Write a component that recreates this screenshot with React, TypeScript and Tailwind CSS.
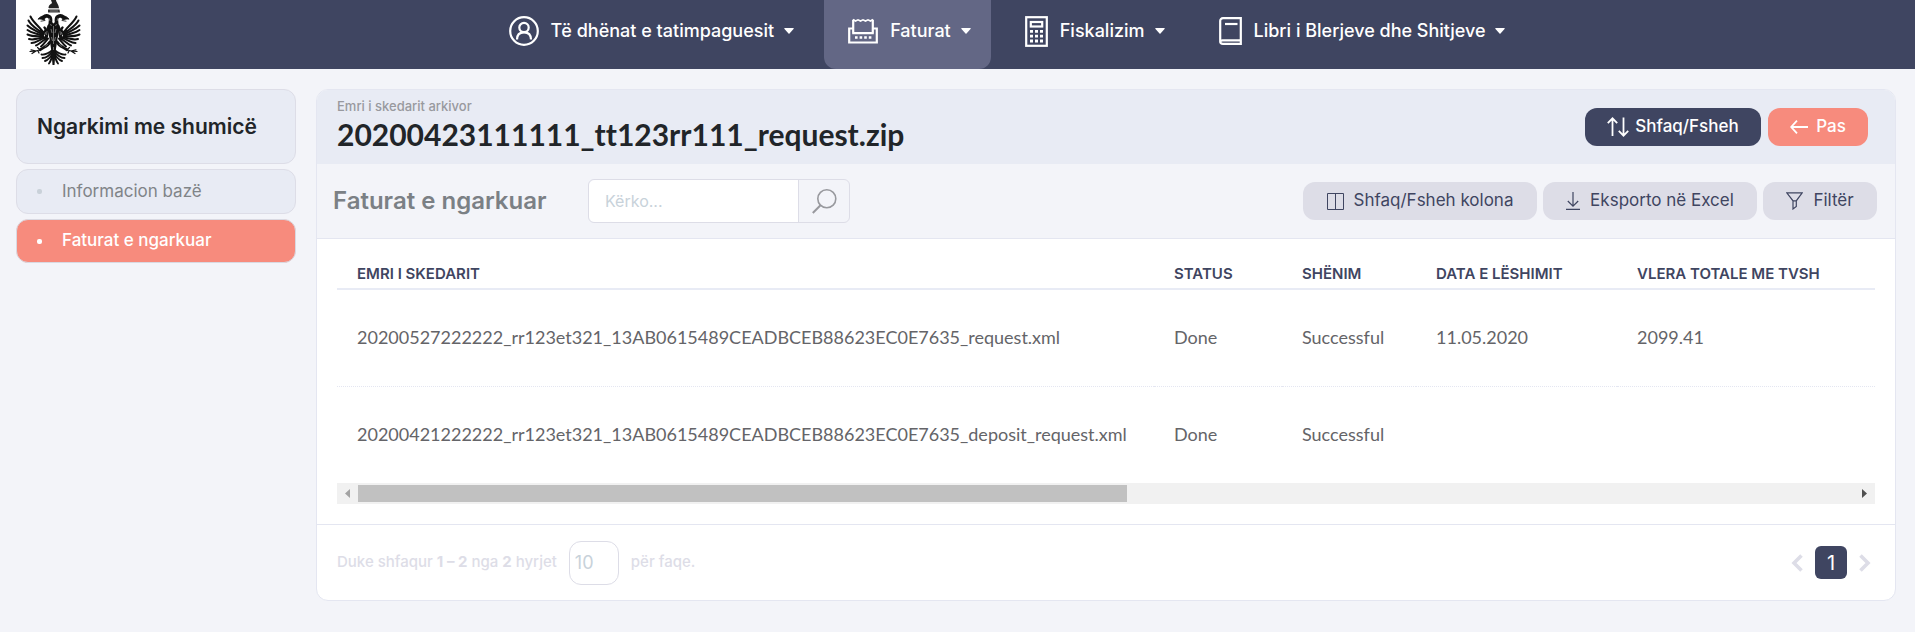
import React from 'react';

interface IconProps {
    className?: string;
}

function EagleHalf() {
    return (
        <g fill="none" stroke="#111" strokeLinecap="round" strokeLinejoin="round">
            {/* wing feathers */}
            <g strokeWidth="2">
                <path d="M28 34 C25 27 18 24 14.500 16.500" />
                <path d="M27 34 C22 29 16 27 12.500 20.500" />
                <path d="M27 35 C21 31 16 30 11.500 25.500" />
                <path d="M27 36 C21 33 16 33.500 11.500 30" />
                <path d="M27.500 36.500 C21 36 17 37 11.500 34.500" />
                <path d="M28 37.500 C22 38 18 40.500 13 39" />
                <path d="M29 38 C24 39 20 43 15.500 43" />
                <path d="M30.500 38.500 C26 41 23 44.500 20 45.500" />
                <path d="M32 38.500 C29 42 27 45 25 46.500" />
            </g>
            {/* shoulder */}
            <path d="M24 31 C29 34 31 30 28.500 27.500" strokeWidth="2.400" />
            <path d="M33 26 C31 30 31 35 30 38" strokeWidth="3.200" />
            {/* head, beak and neck */}
            <path d="M27.500 17.200 C30 14.800 34 16 34.500 19 C35 22 33.500 24 34.500 27" strokeWidth="3.600" />
            <path d="M29 16 C26 15.500 23.500 17 22 19.200 C24.500 18.600 26.500 19.600 28 20 Z" fill="#111" strokeWidth=".8" />
            <path d="M25 21.200 L29 20.500" strokeWidth=".8" />
            {/* leg and claw */}
            <path d="M34 42 C32 46 28 47 24 49.800" strokeWidth="2.800" />
            <path d="M25 49.500 L20 51 L15 49.800 M20 51 L14 51.500 M20 51 L16 53.500 M24 49.800 L21.500 47.500 M22 51 L23 53" strokeWidth="1.200" />
            {/* tail */}
            <g strokeWidth="1.900">
                <path d="M36.500 50 C33 53 29 55 25.500 54.500" />
                <path d="M36.500 51 C34 55 30 58 26.500 58" />
                <path d="M37 52 C35 57 32 60 29 61" />
                <path d="M37 52 C36 57 35 61 33 63.500" />
            </g>
        </g>
    );
}

function Logo() {
    return (
        <svg viewBox="0 0 75 69" className="block h-[69px] w-[75px] bg-white" role="img" aria-label="Logo">
            <EagleHalf />
            <g transform="translate(75 0) scale(-1 1)">
                <EagleHalf />
            </g>
            {/* helmet */}
            <path d="M35 0 L40 0 C40 2 42.500 4 43 8 L32.500 8 C32.500 5 35 4 36 3 Z" fill="#222" />
            <path d="M32 9.500 L43.500 9.500 L44 12.500 L32 12.500 Z" fill="#333" />
            <path d="M33 8.700 H43 M34 11 H42" stroke="#999" strokeWidth=".7" />
            <path d="M34 20 L37.500 23.500 L41 20 L43 30 L41 42 L39.500 52 L38.500 65 H36.500 L35.500 52 L34 42 L32 30 Z" fill="#111" />
            <path d="M37.500 26 V44 M35 29 L36 33 M40 29 L39 33 M35.500 37 L36.500 41 M39.500 37 L38.500 41 M34.500 24 L35.500 26 M40.500 24 L39.500 26 M37.500 47 V50" stroke="#999" strokeWidth=".7" />
            <g stroke="#999" strokeWidth=".6">
                <path d="M33 18 L34 21 M42 18 L41 21 M31 31 L30.500 35 M44 31 L44.500 35 M32 44 L29 46.500 M43 44 L46 46.500" />
            </g>
        </svg>
    );
}

function PersonIcon() {
    return (
        <svg viewBox="0 0 30 30" className="h-[30px] w-[30px]" fill="none" stroke="currentColor" strokeWidth="2.200">
            <circle cx="15" cy="15" r="13.800" />
            <circle cx="15" cy="11.500" r="4.700" />
            <path d="M8 23.500 C8 18.500 11 16.300 15 16.300 C19 16.300 22 18.500 22 23.500" />
        </svg>
    );
}

function InvoiceIcon() {
    return (
        <svg viewBox="0 0 30 26" className="h-[26px] w-[30px]" fill="none" stroke="currentColor" strokeWidth="2.200">
            <path d="M5 10.500 H1.200 V24.500 H28.800 V10.500 H25" />
            <path d="M5.200 15.200 V1.800 M24.800 1.800 V15.200 M4.200 15.200 H25.800" />
            <path d="M5 1.500 L7.500 3 L10 1.800 L12.500 3 L15 1.800 L17.500 3 L20 1.800 L22.500 3 L25 1.500" strokeWidth="1.600" />
            <path d="M7 19.500 H24" strokeWidth="2.600" strokeDasharray="2.600 2" />
        </svg>
    );
}

function CalculatorIcon() {
    return (
        <svg viewBox="0 0 23 31" className="h-[31px] w-[23px]" fill="none" stroke="currentColor" strokeWidth="2.200">
            <rect x="1.200" y="1.200" width="20.600" height="28.600" />
            <rect x="5.800" y="6" width="11.400" height="4.500" />
            <path d="M5 15.300 H18.500 M5 20.200 H18.500 M5 25 H18.500" strokeWidth="2.800" strokeDasharray="3 2" />
        </svg>
    );
}

function BookIcon() {
    return (
        <svg viewBox="0 0 23 28" className="h-7 w-[23px]" fill="none" stroke="currentColor" strokeWidth="2.200">
            <path d="M21.800 23 V1.200 H4 C2.300 1.200 1.200 2.500 1.200 4 V24.500 C1.200 26 2.300 26.800 4 26.800 H21.800 V23.300 H3.500 C2 23.300 1.200 24 1.200 25" />
            <path d="M6 7 H18.500" />
        </svg>
    );
}

function Caret() {
    return (
        <svg viewBox="0 0 10 6" className="h-1.5 w-2.5" fill="currentColor">
            <path d="M.5 0 H9.500 Q10 .5 9.500 1 L5.500 5.500 Q5 6 4.500 5.500 L.5 1 Q0 .5 .5 0 Z" />
        </svg>
    );
}

function SearchIcon() {
    return (
        <svg viewBox="0 0 25 25" className="h-[25px] w-[25px]" fill="none" stroke="currentColor" strokeWidth="1.600">
            <circle cx="14.800" cy="9.800" r="9" />
            <path d="M8.500 16.200 L.8 24" strokeWidth="2" />
        </svg>
    );
}

function SwapIcon() {
    return (
        <svg viewBox="0 0 22 20" className="h-5 w-[22px]" fill="none" stroke="currentColor" strokeWidth="1.800">
            <path d="M5.500 19 V1.500 M.8 6.200 L5.500 1.300 L10.200 6.200 M16.500 .5 V18.500 M11.800 13.800 L16.500 18.700 L21.200 13.800" />
        </svg>
    );
}

function BackIcon() {
    return (
        <svg viewBox="0 0 18 14" className="h-3.5 w-[18px]" fill="none" stroke="currentColor" strokeWidth="1.800">
            <path d="M18 7 H1.500 M7 .7 L1.200 7 L7 13.300" />
        </svg>
    );
}

function ColumnsIcon() {
    return (
        <svg viewBox="0 0 17 17" className="h-[17px] w-[17px]" fill="none" stroke="currentColor">
            <path d="M.5 .5 H16.500 V16.500 H.5 Z M8.500 .5 V16.500" />
        </svg>
    );
}

function DownloadIcon() {
    return (
        <svg viewBox="0 0 14 18" className="h-[18px] w-3.5" fill="none" stroke="currentColor" strokeWidth="1.200">
            <path d="M7 0 V14 M1.800 9 L7 14.200 L12.200 9 M0 17.300 H14" />
        </svg>
    );
}

function FilterIcon() {
    return (
        <svg viewBox="0 0 17 18" className="h-[18px] w-[17px]" fill="none" stroke="currentColor" strokeWidth="1.200">
            <path d="M.8 .8 H16.200 L10.300 8.800 V14.500 L7 17 V8.800 Z M7 8.800 H10.300" />
        </svg>
    );
}

function Chevron({ className }: IconProps) {
    return (
        <svg viewBox="0 0 12 18" className={className} fill="none" stroke="currentColor" strokeWidth="3.600">
            <path d="M10.500 1.500 L3 9 L10.500 16.500" />
        </svg>
    );
}

const menu = [
    { label: 'Të dhënat e tatimpaguesit', icon: <PersonIcon />, active: false },
    { label: 'Faturat', icon: <InvoiceIcon />, active: true },
    { label: 'Fiskalizim', icon: <CalculatorIcon />, active: false },
    { label: 'Libri i Blerjeve dhe Shitjeve', icon: <BookIcon />, active: false },
];

const columns = ['Emri i skedarit', 'Status', 'Shënim', 'Data e lëshimit', 'Vlera totale me TVSH'];
const widths = ['w-[817px]', 'w-[128px]', 'w-[134px]', 'w-[201px]', ''];

const rows = [
    ['20200527222222_rr123et321_13AB0615489CEADBCEB88623EC0E7635_request.xml', 'Done', 'Successful', '11.05.2020', '2099.41'],
    ['20200421222222_rr123et321_13AB0615489CEADBCEB88623EC0E7635_deposit_request.xml', 'Done', 'Successful', '', ''],
];

function Header() {
    return (
        <header className="flex bg-[#3f4561] px-4">
            <Logo />
            <nav className="flex flex-1 justify-center gap-2.5 pl-5 text-lg font-medium text-white">
                {menu.map(({ label, icon, active }) => (
                    <a key={label} href="#" className={`flex items-center rounded-b-xl pr-5 pb-[7px] pl-6 whitespace-nowrap ${active ? 'bg-[#636785]' : ''}`}>
                        {icon}
                        <span className="mr-2.5 ml-3">{label}</span>
                        <Caret />
                    </a>
                ))}
            </nav>
        </header>
    );
}

function Sidebar() {
    return (
        <aside className="flex w-[280px] shrink-0 flex-col gap-[5px]">
            <div className="flex h-[75px] items-center rounded-xl border border-[#dddde7] bg-[#e8ebf4] px-5">
                <h2 className="text-[21px] font-semibold whitespace-nowrap text-[#212529]">Ngarkimi me shumicë</h2>
            </div>
            <a href="#" className="flex h-[45px] items-center rounded-xl border border-[#dddde7] bg-[#e8ebf4] px-5 text-[17px] text-[#808488]">
                <span className="mr-5 h-[5px] w-[5px] rounded-xs bg-[#c9d1d9]" />
                Informacion bazë
            </a>
            <a href="#" className="flex h-11 items-center rounded-xl border border-[#d9d9e2] bg-[#f78b7d] px-5 text-[17px] font-medium text-white">
                <span className="mr-5 h-[5px] w-[5px] rounded-xs bg-white" />
                Faturat e ngarkuar
            </a>
        </aside>
    );
}

function RecordTable() {
    return (
        <table className="w-full table-fixed border-collapse">
            <thead>
                <tr className="border-b-2 border-[#e8ebf5]">
                    {columns.map((c, i) => (
                        <th key={c} scope="col" className={`${widths[i]} h-[50px] pt-5 pl-5 text-left text-[15px] leading-5 font-semibold whitespace-nowrap text-[#3f4561] uppercase`}>
                            {c}
                        </th>
                    ))}
                </tr>
            </thead>
            <tbody className="font-['Lato',sans-serif] text-lg text-[#646468]">
                {rows.map((row, i) => (
                    <tr key={i} className={i === 0 ? 'border-b border-dotted border-[#e4e6f1]' : ''}>
                        {row.map((cell, j) => (
                            <td key={j} className="h-[97px] pb-0.5 pl-5 whitespace-nowrap">{cell}</td>
                        ))}
                    </tr>
                ))}
            </tbody>
        </table>
    );
}

function ScrollBar() {
    return (
        <div className="flex h-[21px] items-center bg-[#f1f1f1]">
            <div className="flex w-[21px] justify-center">
                <svg viewBox="0 0 5 9" className="h-[9px] w-[5px]" fill="#a3a3a3"><path d="M5 0 V9 L0 4.500 Z" /></svg>
            </div>
            <div className="h-[17px] w-1/2 bg-[#c1c1c1]" />
            <div className="ml-auto flex w-[21px] justify-center">
                <svg viewBox="0 0 5 9" className="h-[9px] w-[5px]" fill="#505050"><path d="M0 0 V9 L5 4.500 Z" /></svg>
            </div>
        </div>
    );
}

export default function App() {
    return (
        <div className="min-h-screen bg-[#f3f4f9] font-['Inter',sans-serif]">
            <Header />
            <div className="flex items-start gap-5 pt-5 pr-[19px] pb-8 pl-4">
                <Sidebar />
                <main className="min-w-0 flex-1 overflow-hidden rounded-xl border border-[#e4e6f1] bg-white">
                    <div className="flex h-[74px] items-center justify-between bg-[#e8ebf4] pr-[27px] pl-5">
                        <div className="pb-0.5">
                            <p className="text-[13px] leading-4 font-medium text-[#98999e]">Emri i skedarit arkivor</p>
                            <h1 className="font-['Lato',sans-serif] text-[30px] leading-10 font-bold text-[#212529] [font-variant-ligatures:none]">20200423111111_tt123rr111_request.zip</h1>
                        </div>
                        <div className="flex gap-[7px] text-[17px] font-medium text-white">
                            <button className="flex h-[38px] w-44 items-center justify-center gap-1.5 rounded-xl bg-[#3f4561]">
                                <SwapIcon />
                                Shfaq/Fsheh
                            </button>
                            <button className="flex h-[38px] w-[100px] items-center justify-center gap-2 rounded-xl bg-[#f78b7d]">
                                <BackIcon />
                                Pas
                            </button>
                        </div>
                    </div>

                    <div className="flex h-[75px] items-center border-b border-[#e4e6f1] bg-[#f3f4f9] pr-[18px] pl-4">
                        <h3 className="w-[255px] text-2xl font-semibold whitespace-nowrap text-[#7b8085]">Faturat e ngarkuar</h3>
                        <div className="flex h-11 w-[262px] rounded-md border border-[#dddde7]">
                            <input type="text" aria-label="Kërko" placeholder="Kërko..." className="min-w-0 flex-1 rounded-l-md border-r border-[#dddde7] bg-white px-4 text-base outline-none placeholder:text-[#c8d2da]" />
                            <button aria-label="Kërko" className="flex w-[50px] items-center justify-center text-[#98999e]">
                                <SearchIcon />
                            </button>
                        </div>
                        <div className="ml-auto flex gap-1.5 text-[17px] text-[#3f4561]">
                            <button className="flex h-[38px] w-[234px] items-center justify-center gap-2.5 rounded-xl bg-[#dddde7]">
                                <ColumnsIcon />
                                Shfaq/Fsheh kolona
                            </button>
                            <button className="flex h-[38px] w-[214px] items-center justify-center gap-2.5 rounded-xl bg-[#dddde7]">
                                <DownloadIcon />
                                Eksporto në Excel
                            </button>
                            <button className="flex h-[38px] w-[114px] items-center justify-center gap-2.5 rounded-xl bg-[#dddde7]">
                                <FilterIcon />
                                Filtër
                            </button>
                        </div>
                    </div>

                    <div className="px-5 pb-5">
                        <RecordTable />
                        <ScrollBar />
                    </div>

                    <div className="flex h-[76px] items-center justify-between border-t border-[#e4e6f1] px-5 text-[15px] font-medium text-[#dddde7]">
                        <label className="flex items-center">
                            <span>Duke shfaqur <b>1 – 2</b> nga <b>2</b> hyrjet</span>
                            <select className="mx-3 h-11 w-[50px] appearance-none rounded-xl border border-[#dddde7] bg-white px-[5px] text-lg font-normal text-[#c8d2da]">
                                <option>10</option>
                            </select>
                            <span>për faqe.</span>
                        </label>
                        <div className="flex items-center gap-3 pr-1">
                            <button aria-label="Previous"><Chevron className="h-[18px] w-3" /></button>
                            <button className="h-[33px] w-8 rounded-md bg-[#3f4561] text-xl font-normal text-white">1</button>
                            <button aria-label="Next"><Chevron className="h-[18px] w-3 rotate-180" /></button>
                        </div>
                    </div>
                </main>
            </div>
        </div>
    );
}
